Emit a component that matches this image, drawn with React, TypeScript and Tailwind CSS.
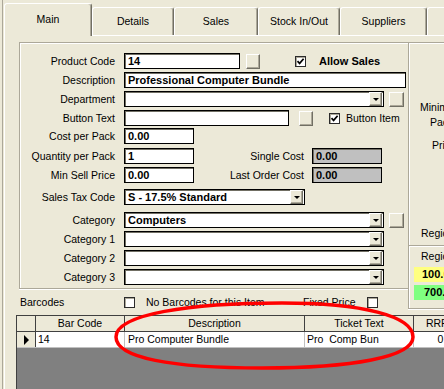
import React from 'react'

const raised =
  'bg-[#ece9d8] border border-t-white border-l-white border-r-[#716f64] border-b-[#716f64] shadow-[inset_-1px_-1px_0_#aca899]'

function Tab({ label, w, active = false }: any) {
  if (active) {
    return (
      <div
        className={`${w} h-[33px] -mb-px relative z-10 shrink-0 bg-[#ece9d8] border-l border-t border-r border-white border-r-[#716f64] rounded-t-[3px] shadow-[inset_-1px_0_0_#aca899] flex justify-center pt-[10px]`}
      >
        {label}
      </div>
    )
  }
  return (
    <div
      className={`${w} h-[28px] shrink-0 border-l border-t border-r border-white border-r-[#716f64] rounded-t-[3px] shadow-[inset_-1px_0_0_#aca899] flex justify-center pt-[8px]`}
    >
      {label}
    </div>
  )
}

function Btn({ className = '' }: any) {
  return <div className={`${raised} shrink-0 ${className}`} />
}

function Check({ checked = false, className = '' }: any) {
  return (
    <div
      className={`w-[11px] h-[11px] shrink-0 bg-white border border-[#2b2b2b] shadow-[inset_1px_1px_0_#aca899] flex items-center justify-center ${className}`}
    >
      {checked && (
        <svg width="9" height="9" viewBox="0 0 9 9">
          <path d="M1.5 4.2 L3.6 6.4 L7.6 1.8" fill="none" stroke="#000" strokeWidth="1.7" />
        </svg>
      )}
    </div>
  )
}

function Edit({ w, value = '', gray = false, children }: any) {
  return (
    <div
      className={`${w} h-[16px] shrink-0 border border-black shadow-[inset_1px_1px_0_#716f64] ${
        gray ? 'bg-[#c0c0c0]' : 'bg-white'
      } flex items-center pl-[3px] font-bold text-[11px] whitespace-nowrap overflow-hidden`}
    >
      {value}
      {children}
    </div>
  )
}

function Combo({ w, value = '' }: any) {
  return (
    <Edit w={w} value={value}>
      <div className={`${raised} ml-auto mr-px w-[13px] h-[14px] shrink-0 flex items-center justify-center`}>
        <div className="w-0 h-0 border-l-[3px] border-r-[3px] border-t-[3px] border-l-transparent border-r-transparent border-t-black" />
      </div>
    </Edit>
  )
}

function Row({ label, mt = '', children }: any) {
  return (
    <div className={`flex items-center h-[16px] ${mt}`}>
      <div className="w-[95px] shrink-0 text-right whitespace-nowrap">{label}</div>
      <div className="ml-[9px] flex items-center">{children}</div>
    </div>
  )
}

export default function App() {
  return (
    <div className="relative w-[444px] h-[389px] overflow-hidden bg-[#ece9d8] text-black text-[10.5px] leading-none font-['Liberation_Sans',Arial,sans-serif] flex">
      <div className="w-[2px] shrink-0" />
      <div className="w-px shrink-0 bg-[#aca899]" />
      <div className="w-px shrink-0" />

      <div className="w-[700px] shrink-0 flex flex-col">
        {/* tab strip */}
        <div className="h-[35px] shrink-0 flex items-end">
          <Tab active w="w-[88px]" label="Main" />
          <Tab w="w-[82px]" label="Details" />
          <Tab w="w-[84px]" label="Sales" />
          <Tab w="w-[82px]" label="Stock In/Out" />
          <Tab w="w-[87px]" label="Suppliers" />
          <Tab w="w-[80px]" label="" />
        </div>

        {/* tab page */}
        <div className="flex-1 border-t border-l border-white pl-[14px] pt-[6px] flex flex-col">
          <div className="flex items-start">
            {/* left column */}
            <div className="w-[389px] shrink-0 flex flex-col">
              <div className="h-[247px] border-t border-l border-b border-[#aca899] shadow-[inset_1px_1px_0_#fff,0_1px_0_#fff] pt-[10px] flex flex-col">
                <Row label="Product Code">
                  <Edit w="w-[116px]" value="14" />
                  <Btn className="ml-[6px] w-[14px] h-[15px]" />
                  <Check checked className="ml-[35px]" />
                  <span className="ml-[13px] font-bold text-[11px]">Allow Sales</span>
                </Row>
                <Row label="Description" mt="mt-[3px]">
                  <Edit w="w-[282px]" value="Professional Computer Bundle" />
                </Row>
                <Row label="Department" mt="mt-[3px]">
                  <Combo w="w-[260px]" />
                  <Btn className="ml-[5px] w-[15px] h-[15px]" />
                </Row>
                <Row label="Button Text" mt="mt-[3px]">
                  <Edit w="w-[165px]" />
                  <Btn className="ml-[10px] w-[14px] h-[15px]" />
                  <Check checked className="ml-[16px]" />
                  <span className="ml-[6px]">Button Item</span>
                </Row>
                <Row label="Cost per Pack" mt="mt-[2px]">
                  <Edit w="w-[70px]" value="0.00" />
                </Row>
                <Row label="Quantity per Pack" mt="mt-[4px]">
                  <Edit w="w-[70px]" value="1" />
                  <div className="w-[110px] text-right">Single Cost</div>
                  <div className="ml-[8px]">
                    <Edit w="w-[70px]" value="0.00" gray />
                  </div>
                </Row>
                <Row label="Min Sell Price" mt="mt-[3px]">
                  <Edit w="w-[70px]" value="0.00" />
                  <div className="w-[110px] text-right">Last Order Cost</div>
                  <div className="ml-[8px]">
                    <Edit w="w-[70px]" value="0.00" gray />
                  </div>
                </Row>
                <Row label="Sales Tax Code" mt="mt-[6px]">
                  <Combo w="w-[181px]" value="S - 17.5% Standard" />
                </Row>
                <Row label="Category" mt="mt-[7px]">
                  <Combo w="w-[260px]" value="Computers" />
                  <Btn className="ml-[5px] w-[15px] h-[15px]" />
                </Row>
                <Row label="Category 1" mt="mt-[3px]">
                  <Combo w="w-[260px]" />
                </Row>
                <Row label="Category 2" mt="mt-[3px]">
                  <Combo w="w-[260px]" />
                </Row>
                <Row label="Category 3" mt="mt-[3px]">
                  <Combo w="w-[260px]" />
                </Row>
              </div>

              <div className="mt-[8px] h-[11px] flex items-center">
                <div className="w-[105px] pl-px shrink-0">Barcodes</div>
                <Check />
                <div className="w-[157px] ml-[11px] shrink-0">No Barcodes for this Item</div>
                <div className="w-[64px] shrink-0">Fixed Price</div>
                <Check />
              </div>
            </div>

            {/* right panel */}
            <div className="w-[200px] h-[267px] shrink-0 border-t border-l border-b border-[#aca899] shadow-[inset_1px_1px_0_#fff,0_1px_0_#fff] flex flex-col">
              <div className="mt-[58px] ml-[11px] h-[12px] flex items-center">Minimum Stock</div>
              <div className="mt-[3px] ml-[21px] h-[12px] flex items-center">Pack Size</div>
              <div className="mt-[11px] ml-[23px] h-[12px] flex items-center">Price Level</div>
              <div className="mt-[76px] ml-[12px] h-[12px] flex items-center">Region Price</div>
              <div className="mt-[6px] h-[2px] border-t border-[#aca899] shadow-[inset_0_1px_0_#fff]" />
              <div className="mt-[3px] ml-[12px] h-[12px] flex items-center">Region Stock</div>
              <div className="mt-[5px] ml-[5px] h-[15px] bg-[#ffff80] flex items-center pl-[8px] font-bold text-[11px]">
                100.00
              </div>
              <div className="mt-[3px] ml-[5px] h-[15px] bg-[#80ff80] flex items-center pl-[10px] font-bold text-[11px]">
                700.00
              </div>
            </div>
          </div>

          {/* barcode grid */}
          <div className="-ml-[3px] mt-[6px] flex-1 border-l border-t border-[#404040] bg-[#808080] flex flex-col">
            <div className="h-[16px] flex bg-[#ece9d8] border-b border-[#404040]">
              <div className="w-[19px] border-r border-[#404040]" />
              <div className="w-[89px] border-r border-[#404040] flex items-center justify-center">Bar Code</div>
              <div className="w-[180px] border-r border-[#404040] flex items-center justify-center">Description</div>
              <div className="w-[109px] border-r border-[#404040] flex items-center justify-center">Ticket Text</div>
              <div className="w-[47px] border-r border-[#404040] flex items-center justify-center">RRP</div>
            </div>
            <div className="h-[16px] flex bg-white border-b border-[#c0c0c0]">
              <div className="w-[19px] bg-[#ece9d8] border-r border-[#404040] flex items-center pl-[7px]">
                <div className="w-0 h-0 border-t-[5px] border-b-[5px] border-l-[5px] border-t-transparent border-b-transparent border-l-black" />
              </div>
              <div className="w-[89px] border-r border-[#c0c0c0] flex items-center pl-[2px]">14</div>
              <div className="w-[180px] border-r border-[#c0c0c0] flex items-center pl-[3px]">Pro Computer Bundle</div>
              <div className="w-[109px] border-r border-[#c0c0c0] flex items-center pl-[2px] whitespace-pre">Pro  Comp Bun</div>
              <div className="w-[47px] border-r border-[#c0c0c0] flex items-center justify-end pr-[2px]">0.00</div>
            </div>
          </div>
        </div>
      </div>

      {/* red annotation */}
      <svg className="absolute left-0 top-0 pointer-events-none" width="444" height="389">
        <path
          d="M116 337 C116 314 190 303 282 303 C362 303 413 316 413 337 C413 357 352 368 262 368 C172 368 116 358 116 337 Z"
          fill="none"
          stroke="#ff0000"
          strokeWidth="3.5"
        />
      </svg>
    </div>
  )
}
